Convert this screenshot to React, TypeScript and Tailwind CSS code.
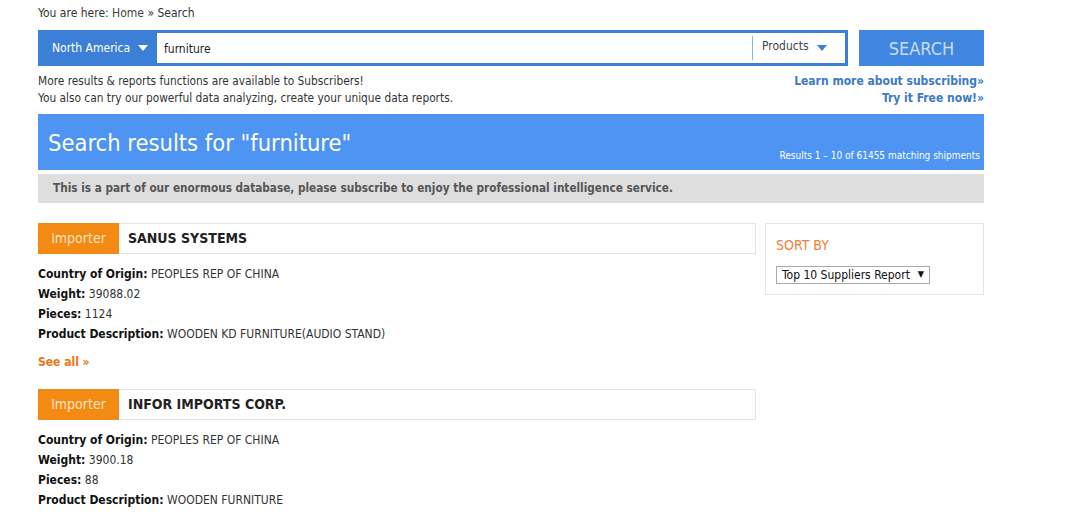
const font = { fontFamily: '"DejaVu Sans Condensed", "DejaVu Sans", Verdana, sans-serif' };

const Breadcrumb = () => (
  <div className="h-[24px] pt-[4px] text-[12px] text-[#333]">
    You are here: <span className="text-[#444]">Home</span> » Search
  </div>
);

const Caret = ({ color }: { color: string }) => (
  <svg width="10" height="6" viewBox="0 0 10 6" className="inline-block">
    <path d="M0 0 L10 0 L5 6 Z" fill={color} />
  </svg>
);

const SearchBar = () => (
  <div className="mt-[6px] flex h-[36px]">
    <div className="flex w-[119px] items-center justify-between bg-[#3c7fd6] pl-[14px] pr-[9px] text-[12px] text-white">
      <span>North America</span>
      <Caret color="#ffffff" />
    </div>
    <div className="flex w-[691px] items-center border-[3px] border-l-0 border-[#3c7fd6] bg-white">
      <div className="flex-1 pl-[7px] pt-px text-[12px] text-[#222]">furniture</div>
      <div className="flex h-[24px] w-[93px] items-center justify-between border-l border-[#8ab1e0] pl-[9px] pr-[18px] text-[12px] text-[#444]">
        <span className="-mt-[4px]">Products</span>
        <Caret color="#3c7fd6" />
      </div>
    </div>
    <div className="ml-[11px] flex w-[125px] items-center justify-center bg-[#3f86e0] text-[18px] text-[#c9dcf5]">
      SEARCH
    </div>
  </div>
);

const InfoLines = () => (
  <div className="mt-[7px] flex justify-between text-[12px] leading-[17px]">
    <div className="text-[11.8px] text-[#333]">
      <div>More results &amp; reports functions are available to Subscribers!</div>
      <div>You also can try our powerful data analyzing, create your unique data reports.</div>
    </div>
    <div className="text-right font-bold text-[#3d79c7]">
      <div>Learn more about subscribing»</div>
      <div>Try it Free now!»</div>
    </div>
  </div>
);

const Banner = () => (
  <div className="mt-[7px] flex h-[56px] items-center justify-between bg-[#4d94f3] pl-[10px] pr-[4px]">
    <div className="pt-[3px] text-[23.5px] text-white">Search results for "furniture"</div>
    <div className="mt-[27px] text-[10px] text-white">Results 1 – 10 of 61455 matching shipments</div>
  </div>
);

const Notice = () => (
  <div className="mt-[4px] flex h-[29px] items-center bg-[#dedede] pl-[15px] text-[11.7px] font-bold text-[#555]">
    This is a part of our enormous database, please subscribe to enjoy the professional intelligence service.
  </div>
);

type Row = { label: string; value: string };

const ResultCard = ({ name, rows, seeAll }: { name: string; rows: Row[]; seeAll?: boolean }) => (
  <div>
    <div className="flex h-[31px] border border-[#e3e3e3]">
      <div className="-my-px -ml-px flex w-[81px] items-center justify-center bg-[#f38a13] text-[14px] text-[#fde3c2]">
        Importer
      </div>
      <div className="flex items-center pl-[9px] text-[14px] font-bold text-[#222]">{name}</div>
    </div>
    <div className="mt-[10px] text-[12px] leading-[20px] text-[#333]">
      {rows.map((r) => (
        <div key={r.label}>
          <span className="font-bold text-[#111]">{r.label}:</span> {r.value}
        </div>
      ))}
    </div>
    {seeAll && <div className="mt-[9px] text-[12px] font-bold text-[#ec7413]">See all »</div>}
  </div>
);

const SortBox = () => (
  <div className="h-[72px] w-[219px] border border-[#e5e5e5] px-[10px] pt-[11px]">
    <div className="text-[14px] text-[#ee8038]">SORT BY</div>
    <div className="mt-[10px] flex h-[18px] w-[154px] items-center justify-between border border-[#aaa] pl-[5px] pr-[5px] text-[12px] text-[#111]">
      <span>Top 10 Suppliers Report</span>
      <span className="text-[9px]">▼</span>
    </div>
  </div>
);

export default function App() {
  return (
    <div className="min-h-screen bg-white" style={font}>
      <div className="ml-[38px] w-[946px]">
        <Breadcrumb />
        <SearchBar />
        <InfoLines />
        <Banner />
        <Notice />
        <div className="mt-[20px] flex justify-between">
          <div className="flex w-[718px] flex-col gap-[18px]">
            <ResultCard
              name="SANUS SYSTEMS"
              seeAll
              rows={[
                { label: 'Country of Origin', value: 'PEOPLES REP OF CHINA' },
                { label: 'Weight', value: '39088.02' },
                { label: 'Pieces', value: '1124' },
                { label: 'Product Description', value: 'WOODEN KD FURNITURE(AUDIO STAND)' },
              ]}
            />
            <ResultCard
              name="INFOR IMPORTS CORP."
              rows={[
                { label: 'Country of Origin', value: 'PEOPLES REP OF CHINA' },
                { label: 'Weight', value: '3900.18' },
                { label: 'Pieces', value: '88' },
                { label: 'Product Description', value: 'WOODEN FURNITURE' },
              ]}
            />
          </div>
          <SortBox />
        </div>
      </div>
    </div>
  );
}
